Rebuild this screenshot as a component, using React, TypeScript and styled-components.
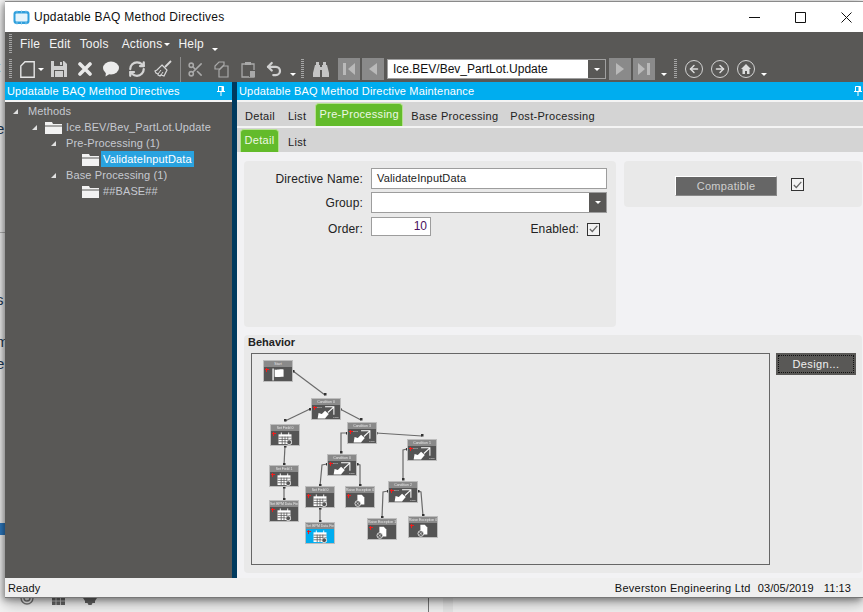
import React from 'react';
import styled, {createGlobalStyle} from 'styled-components';
import {ArrowLeft, ArrowRight, RefreshCw, Scissors, Undo2} from 'lucide-react';

const GlobalStyle = createGlobalStyle`
    html, body {
        margin: 0;
        padding: 0;
        background: #f4f4f4;
        font-family: "Liberation Sans", Arial, sans-serif;
    }
`

type NodeKind = 'flag' | 'cond' | 'cal' | 'raise'

type FlowNode = { x: number, y: number, title: string, kind: NodeKind, blue?: boolean }

const nodes: FlowNode[] = [
    {x: 263, y: 360, title: 'Start', kind: 'flag'},
    {x: 311, y: 398, title: 'Condition 0', kind: 'cond'},
    {x: 270, y: 424, title: 'Set Field 0', kind: 'cal'},
    {x: 347, y: 422, title: 'Condition 3', kind: 'cond'},
    {x: 407, y: 439, title: 'Condition 1', kind: 'cond'},
    {x: 327, y: 454, title: 'Condition 0', kind: 'cond'},
    {x: 269, y: 465, title: 'Set Field 1', kind: 'cal'},
    {x: 269, y: 500, title: 'Set BPM Data Field', kind: 'cal'},
    {x: 305, y: 486, title: 'Set Field 0', kind: 'cal'},
    {x: 345, y: 486, title: 'Raise Exception 0', kind: 'raise'},
    {x: 388, y: 481, title: 'Condition 2', kind: 'cond'},
    {x: 367, y: 518, title: 'Raise Exception 1', kind: 'raise'},
    {x: 408, y: 516, title: 'Raise Exception 0', kind: 'raise'},
    {x: 305, y: 522, title: 'Set BPM Data Field', kind: 'cal', blue: true},
]

const edges: number[][][] = [
    [[293, 371], [325, 395]],
    [[310, 409], [285, 421]],
    [[340, 409], [361, 420]],
    [[285, 446], [284, 465]],
    [[284, 487], [284, 500]],
    [[347, 433], [341, 433], [341, 453]],
    [[376, 433], [422, 436]],
    [[407, 449], [403, 450], [403, 480]],
    [[327, 464], [322, 465], [320, 486]],
    [[357, 464], [360, 465], [360, 486]],
    [[320, 508], [320, 522]],
    [[388, 491], [383, 492], [382, 518]],
    [[418, 491], [421, 492], [423, 516]],
]

const NodeIcon = ({kind}: { kind: NodeKind }) => {
    if (kind === 'flag') {
        return (
            <svg width="14" height="14" viewBox="0 0 14 14">
                <path d="M1 .5h1.400v13H1z" fill="#fff"/>
                <path d="M3.400 1.500c3 1 5-.6 9.600 0v8c-3-.8-6.600 1-9.600 0z" fill="#fff"/>
            </svg>
        )
    }
    if (kind === 'cond') {
        return (
            <svg width="20" height="14" viewBox="0 0 20 14">
                <path d="M1 13.500l1-6 3.500 1 3.500-3.500 4 3.500-3 3.500-1 1.500z" fill="#fff"/>
                <path d="M9 .8h9.500v8.500M18 1.500L12 7" fill="none" stroke="#fff" strokeWidth="1.100"/>
            </svg>
        )
    }
    if (kind === 'cal') {
        return (
            <svg width="16" height="14" viewBox="0 0 16 14">
                <path d="M1 2.500h14V13H1z" fill="#fff"/>
                <path d="M1 5.500h14M1 8h14M1 10.500h14M5 5v8M8 5v8M11 5v8" stroke="#555" strokeWidth=".8"/>
                <path d="M4 .5v3M12 .5v3" stroke="#fff" strokeWidth="1"/>
                <circle cx="12.500" cy="11" r="2.600" fill="#555" stroke="#fff" strokeWidth=".8"/>
            </svg>
        )
    }
    return (
        <svg width="14" height="15" viewBox="0 0 14 15">
            <path d="M4 1h5l3 3v8H4z" fill="#fff"/>
            <circle cx="4.500" cy="11" r="3.300" fill="#555" stroke="#fff" strokeWidth=".9"/>
            <path d="M3 9.500l3 3M6 9.500l-3 3" stroke="#fff" strokeWidth=".7"/>
        </svg>
    )
}

const Caret = styled.span<{ $ml: number, $low?: boolean }>`
    width: 0;
    height: 0;
    margin-left: ${p => p.$ml}px;
    margin-top: ${p => p.$low ? 10 : 0}px;
    border-left: 3px solid transparent;
    border-right: 3px solid transparent;
    border-top: 3px solid #fff;
    flex: none;
`

const Grip = styled.span<{ $ml: number }>`
    width: 3px;
    height: 20px;
    margin-left: ${p => p.$ml}px;
    flex: none;
    background: repeating-linear-gradient(to bottom, #a5a5a5 0 1px, transparent 1px 2px);
`

const Slot = styled.span<{ $ml: number }>`
    display: flex;
    margin-left: ${p => p.$ml}px;
    flex: none;
`

const PinIcon = () => (
    <svg width="8" height="10" viewBox="0 0 8 10">
        <path d="M1.500 .5h5v5h-5zM0 5.500h8M4 6v4" fill="none" stroke="#fff" strokeWidth="1"/>
        <path d="M4.500 1h1.500v4.500H4.500z" fill="#fff"/>
    </svg>
)

const FolderIcon = () => (
    <svg width="17" height="13" viewBox="0 0 17 13">
        <path d="M0 1h7l1 2h9v1.500H0z" fill="#f2f2f2"/>
        <path d="M0 5.500h17V13H0z" fill="#f2f2f2"/>
    </svg>
)

const NavArrow = ({dir, end}: { dir: 'l' | 'r', end?: boolean }) => (
    <svg width="16" height="16" viewBox="0 0 16 16" fill="#b9b9b9">
        {dir === 'l'
            ? <path d={end ? 'M14 2v12L7 8z' : 'M12 2v12L4 8z'}/>
            : <path d={end ? 'M2 2v12l7-6z' : 'M4 2v12l8-6z'}/>}
        {end && <path d={dir === 'l' ? 'M2 2h3v12H2z' : 'M11 2h3v12h-3z'}/>}
    </svg>
)

const Check = () => (
    <svg width="9" height="8" viewBox="0 0 9 8">
        <path d="M.8 4l2.500 2.500L8.300 .8" fill="none" stroke="#666" strokeWidth="1.200"/>
    </svg>
)

const App = () => {
    return (
        <Desktop>
            <GlobalStyle/>
            <BackText $top={58}>t</BackText>
            <BackText $top={82}>;</BackText>
            <BackText $top={120}>e</BackText>
            <BackText $top={291}>s</BackText>
            <BackText $top={311}>l</BackText>
            <BackText $top={333}>m</BackText>
            <BackText $top={355}>e</BackText>
            <BackRule/>
            <BackBlue/>
            <BackLine/>
            <BackBand/>
            <BackIcons>
                <svg width="14" height="7" viewBox="0 0 14 7">
                    <path d="M1 0a6 6 0 0 0 12 0M4 0a3 3 0 0 0 6 0" fill="none" stroke="#777" strokeWidth="1.300"/>
                </svg>
                <svg width="13" height="7" viewBox="0 0 13 7">
                    <path d="M0 0h13v7H0z" fill="#666"/>
                    <path d="M4 0v7M8.500 0v7M0 3h13" stroke="#ddd" strokeWidth=".8"/>
                </svg>
                <svg width="14" height="7" viewBox="0 0 14 7">
                    <path d="M0 0h14l-2 3v2H9.500l-1 2h-3l-1-2H2V3z" fill="#666"/>
                </svg>
            </BackIcons>

            <Window>
                <TitleBar>
                    <AppLogo>
                        <svg width="17" height="15" viewBox="0 0 17 15">
                            <rect x="0.500" y="1" width="16" height="13" rx="3" fill="#2f9fdc"/>
                            <rect x="2.500" y="3.500" width="12" height="8" rx="1" fill="#e4f4fc"/>
                            <path d="M4 .5v2M8.500 .5v2M13 .5v2M4 12v2.500M8.500 12v2.500M13 12v2.500" stroke="#7fc6ec"/>
                        </svg>
                    </AppLogo>
                    <TitleText>Updatable BAQ Method Directives</TitleText>
                    <WindowControls>
                        <WindowButton>
                            <svg width="11" height="11" viewBox="0 0 11 11"><path d="M0 5.500h11" stroke="#111"/></svg>
                        </WindowButton>
                        <WindowButton>
                            <svg width="11" height="11" viewBox="0 0 11 11"><path d="M.5 .5h10v10H.5z" fill="none" stroke="#111"/></svg>
                        </WindowButton>
                        <WindowButton>
                            <svg width="11" height="11" viewBox="0 0 11 11"><path d="M.5 .5l10 10M10.500 .5l-10 10" stroke="#111"/></svg>
                        </WindowButton>
                    </WindowControls>
                </TitleBar>

                <MenuRow>
                    <Grip $ml={4}/>
                    <MenuItem $ml={8}>File</MenuItem>
                    <MenuItem $ml={9}>Edit</MenuItem>
                    <MenuItem $ml={9}>Tools</MenuItem>
                    <MenuItem $ml={13}>Actions</MenuItem>
                    <Caret $ml={2}/>
                    <MenuItem $ml={8}>Help</MenuItem>
                    <Caret $ml={8} $low/>
                </MenuRow>

                <ToolRow>
                    <Grip $ml={4}/>
                    <Slot $ml={8}>
                        <svg width="15" height="17" viewBox="0 0 15 17">
                            <path d="M5 .8h9.200v15.400H.8V5z" fill="none" stroke="#e6e6e6" strokeWidth="1.400"/>
                        </svg>
                    </Slot>
                    <Caret $ml={3}/>
                    <Slot $ml={7}>
                        <svg width="16" height="16" viewBox="0 0 16 16">
                            <path d="M0 0h13l3 3v13H0z" fill="#cfcfcf"/>
                            <path d="M3 0h9v5H3z" fill="#595856"/>
                            <path d="M9 1h2v3H9z" fill="#cfcfcf"/>
                            <path d="M3 9h10v7H3z" fill="#595856"/>
                            <path d="M4 10h8v6H4z" fill="#cfcfcf"/>
                        </svg>
                    </Slot>
                    <Slot $ml={11}>
                        <svg width="14" height="14" viewBox="0 0 14 14">
                            <path d="M2 2l10 10M12 2L2 12" stroke="#e8e8e8" strokeWidth="3.600" strokeLinecap="round"/>
                        </svg>
                    </Slot>
                    <Slot $ml={11}>
                        <svg width="16" height="16" viewBox="0 0 16 16">
                            <ellipse cx="8" cy="7" rx="8" ry="6.500" fill="#ececec"/>
                            <path d="M3 11l-.5 4.500L8 12z" fill="#ececec"/>
                        </svg>
                    </Slot>
                    <Slot $ml={9}>
                        <RefreshCw size={18} color="#d4d4d4" strokeWidth={3}/>
                    </Slot>
                    <Slot $ml={8}>
                        <svg width="18" height="18" viewBox="0 0 18 18">
                            <path d="M17 1l-6 6" stroke="#d8d8d8" strokeWidth="1.800"/>
                            <path d="M8 5l5 5-3 6-3-1-1 1-2-1 0-1-2-1-1-2 2-1z" fill="none" stroke="#d8d8d8" strokeWidth="1.200"/>
                            <path d="M4 14l3-4M7 15l2-3" stroke="#d8d8d8"/>
                        </svg>
                    </Slot>
                    <ToolSeparator/>
                    <Slot $ml={6}>
                        <Scissors size={17} color="#a9a9a9" strokeWidth={2.200}/>
                    </Slot>
                    <Slot $ml={10}>
                        <svg width="15" height="17" viewBox="0 0 15 17" fill="none" stroke="#a9a9a9" strokeWidth="1.200">
                            <path d="M5 1h5v3L6 8H1V5z"/>
                            <path d="M9 5h5v11H5V9z"/>
                        </svg>
                    </Slot>
                    <Slot $ml={12}>
                        <svg width="15" height="17" viewBox="0 0 15 17">
                            <path d="M1 3h12v13H1z" fill="none" stroke="#a9a9a9" strokeWidth="1.300"/>
                            <path d="M4 1h6v3H4z" fill="#a9a9a9"/>
                            <path d="M8 9h7v7H8z" fill="#595856"/>
                            <path d="M9 10h5v6H9z" fill="#a9a9a9"/>
                        </svg>
                    </Slot>
                    <Slot $ml={9}>
                        <Undo2 size={18} color="#d0d0d0" strokeWidth={3}/>
                    </Slot>
                    <Caret $ml={7} $low/>
                    <Grip $ml={5}/>
                    <Slot $ml={9}>
                        <svg width="16" height="15" viewBox="0 0 16 15" fill="#c4c4c4">
                            <path d="M3 0h3v3H3zM10 0h3v3h-3z"/>
                            <path d="M2 3h5v2h2V3h5l2 8v4H9V8H7v7H0v-4z"/>
                        </svg>
                    </Slot>
                    <NavButton $ml={9}><NavArrow dir="l" end/></NavButton>
                    <NavButton $ml={2}><NavArrow dir="l"/></NavButton>
                    <Combo>
                        <ComboText>Ice.BEV/Bev_PartLot.Update</ComboText>
                        <ComboDrop><Caret $ml={0}/></ComboDrop>
                    </Combo>
                    <NavButton $ml={3}><NavArrow dir="r"/></NavButton>
                    <NavButton $ml={2}><NavArrow dir="r" end/></NavButton>
                    <Caret $ml={6} $low/>
                    <Grip $ml={7}/>
                    <RoundButton $ml={8}><ArrowLeft size={12} color="#ddd" strokeWidth={3}/></RoundButton>
                    <RoundButton $ml={8}><ArrowRight size={12} color="#ddd" strokeWidth={3}/></RoundButton>
                    <RoundButton $ml={8}>
                        <svg width="10" height="10" viewBox="0 0 10 10">
                            <path d="M5 0l5 5H8.500v5H6V7H4v3H1.500V5H0z" fill="#ddd"/>
                        </svg>
                    </RoundButton>
                    <Caret $ml={6} $low/>
                </ToolRow>

                <Body>
                    <LeftPanel>
                        <DockHeader $pinGap={7}>
                            <span>Updatable BAQ Method Directives</span>
                            <PinIcon/>
                        </DockHeader>
                        <Tree>
                            <TreeRow $indent={8}><TreeArrow/><TreeLabel>Methods</TreeLabel></TreeRow>
                            <TreeRow $indent={27}><TreeArrow/><FolderIcon/><TreeLabel $ml={2}>Ice.BEV/Bev_PartLot.Update</TreeLabel></TreeRow>
                            <TreeRow $indent={46}><TreeArrow/><TreeLabel>Pre-Processing (1)</TreeLabel></TreeRow>
                            <TreeRow $indent={77}><FolderIcon/><TreeLabel $ml={2} $selected>ValidateInputData</TreeLabel></TreeRow>
                            <TreeRow $indent={46}><TreeArrow/><TreeLabel>Base Processing (1)</TreeLabel></TreeRow>
                            <TreeRow $indent={77}><FolderIcon/><TreeLabel $ml={2}>##BASE##</TreeLabel></TreeRow>
                        </Tree>
                    </LeftPanel>

                    <Splitter/>

                    <RightPanel>
                        <DockHeader $pinGap={1}>
                            <span>Updatable BAQ Method Directive Maintenance</span>
                            <PinIcon/>
                        </DockHeader>
                        <TabStrip>
                            <Tab $ml={8}>Detail</Tab>
                            <Tab $ml={13}>List</Tab>
                            <Tab $ml={9} $active $w={88}>Pre-Processing</Tab>
                            <Tab $ml={8}>Base Processing</Tab>
                            <Tab $ml={12}>Post-Processing</Tab>
                        </TabStrip>
                        <TabStrip $last>
                            <Tab $ml={3} $active $w={39}>Detail</Tab>
                            <Tab $ml={9}>List</Tab>
                        </TabStrip>

                        <Content>
                            <TopPanels>
                                <FormPanel>
                                    <FieldLabel>Directive Name:</FieldLabel>
                                    <TextBox>ValidateInputData</TextBox>
                                    <FieldLabel>Group:</FieldLabel>
                                    <TextBox $drop>
                                        <ComboDrop $slim><Caret $ml={0}/></ComboDrop>
                                    </TextBox>
                                    <FieldLabel $low>Order:</FieldLabel>
                                    <OrderRow>
                                        <OrderBox>10</OrderBox>
                                        <EnabledField>
                                            <span>Enabled:</span>
                                            <CheckBox><Check/></CheckBox>
                                        </EnabledField>
                                    </OrderRow>
                                </FormPanel>
                                <CompatPanel>
                                    <CompatButton>Compatible</CompatButton>
                                    <CheckBox><Check/></CheckBox>
                                </CompatPanel>
                            </TopPanels>

                            <BehaviorPanel>
                                <BehaviorTitle>Behavior</BehaviorTitle>
                                <BehaviorRow>
                                    <Canvas>
                                        <CanvasInner>
                                            <EdgeLayer viewBox="252 354 517 210">
                                                {edges.map((e, i) => (
                                                    <g key={i}>
                                                        <polyline
                                                            points={e.map(p => p.join(',')).join(' ')}
                                                            fill="none"
                                                            stroke="#6a6a6a"
                                                            strokeWidth="1.200"
                                                        />
                                                        <rect x={e[0][0] - 1} y={e[0][1] - 1} width="2.500" height="2.500" fill="#333"/>
                                                        <rect x={e[e.length - 1][0] - 1} y={e[e.length - 1][1] - 2} width="2.500" height="2.500" fill="#333"/>
                                                    </g>
                                                ))}
                                            </EdgeLayer>
                                            {nodes.map((n, i) => (
                                                <Node key={i} $x={n.x - 252} $y={n.y - 354} $blue={n.blue}>
                                                    <NodeTitle>{n.title}</NodeTitle>
                                                    <NodeBody>
                                                        <RedPlus/>
                                                        <NodeIcon kind={n.kind}/>
                                                        {n.kind === 'cond' && <NodeTag $side="true">True</NodeTag>}
                                                        {n.kind === 'cond' && <NodeTag $side="false">False</NodeTag>}
                                                    </NodeBody>
                                                </Node>
                                            ))}
                                        </CanvasInner>
                                    </Canvas>
                                    <DesignButton><span>Design...</span></DesignButton>
                                </BehaviorRow>
                            </BehaviorPanel>
                        </Content>
                    </RightPanel>
                </Body>

                <StatusBar>
                    <StatusText>Ready</StatusText>
                    <StatusRight>
                        <StatusText $spacing={.25}>Beverston Engineering Ltd</StatusText>
                        <StatusText>03/05/2019</StatusText>
                        <StatusText>11:13</StatusText>
                    </StatusRight>
                </StatusBar>
            </Window>
        </Desktop>
    );
};

export default App;

const Desktop = styled.div`
    position: relative;
    width: 863px;
    height: 612px;
    overflow: hidden;
    padding: 1px 0 0 5px;
    box-sizing: border-box;
    background: #f4f4f4;
`
const BackText = styled.span<{ $top: number }>`
    position: absolute;
    left: -4px;
    top: ${p => p.$top}px;
    font-size: 15px;
    color: #1d3a55;
`
const BackRule = styled.div`
    position: absolute;
    left: 0;
    top: 232px;
    width: 5px;
    height: 1px;
    background: #b5b5b5;
`
const BackBlue = styled.div`
    position: absolute;
    left: 0;
    top: 523px;
    width: 5px;
    height: 12px;
    background: #2f7cc4;
`
const BackLine = styled.div`
    position: absolute;
    left: 428px;
    top: 598px;
    width: 1px;
    height: 14px;
    background: #777;
`
const BackBand = styled.div`
    position: absolute;
    left: 443px;
    top: 598px;
    width: 10px;
    height: 14px;
    background: #e9e9e9;
`
const BackIcons = styled.div`
    position: absolute;
    left: 20px;
    top: 598px;
    display: flex;
    gap: 18px;
`
const Window = styled.div`
    position: relative;
    width: 858px;
    height: 597px;
    display: flex;
    flex-direction: column;
    background: #fff;
    border-top: 1px solid #8a8a8a;
    box-sizing: border-box;
    box-shadow: -2px 2px 6px rgba(0, 0, 0, .35), 0 6px 14px rgba(0, 0, 0, .3);
`
const TitleBar = styled.div`
    height: 30px;
    flex: none;
    display: flex;
    align-items: center;
    background: #fff;
    padding-left: 8px;
`
const AppLogo = styled.span`
    display: flex;
    width: 21px;
`
const TitleText = styled.span`
    font-size: 12px;
    letter-spacing: .25px;
    color: #111;
`
const WindowControls = styled.div`
    display: flex;
    margin-left: auto;
    margin-right: -6px;
`
const WindowButton = styled.span`
    width: 46px;
    height: 30px;
    display: flex;
    align-items: center;
    justify-content: center;
`
const MenuRow = styled.div`
    height: 25px;
    flex: none;
    display: flex;
    align-items: center;
    padding-bottom: 1px;
    box-sizing: border-box;
    background: #595856;
`
const MenuItem = styled.span<{ $ml: number }>`
    margin-left: ${p => p.$ml}px;
    font-size: 12px;
    letter-spacing: .2px;
    color: #f4f4f4;
`
const ToolRow = styled.div`
    height: 25px;
    flex: none;
    display: flex;
    align-items: center;
    padding-bottom: 1px;
    box-sizing: border-box;
    background: #595856;
`
const ToolSeparator = styled.span`
    width: 1px;
    height: 25px;
    margin-left: 8px;
    background: #8c8c8c;
    flex: none;
`
const NavButton = styled.span<{ $ml: number }>`
    width: 22px;
    height: 22px;
    margin-left: ${p => p.$ml}px;
    display: flex;
    align-items: center;
    justify-content: center;
    background: #8a8a8a;
    flex: none;
`
const Combo = styled.div`
    width: 219px;
    height: 20px;
    margin-left: 3px;
    display: flex;
    background: #fff;
    border: 1px solid #a0a0a0;
    box-sizing: border-box;
    flex: none;
`
const ComboText = styled.span`
    flex: 1;
    padding-left: 5px;
    font-size: 12px;
    line-height: 18px;
    color: #111;
`
const ComboDrop = styled.span<{ $slim?: boolean }>`
    width: 17px;
    display: flex;
    align-items: center;
    justify-content: center;
    background: #595856;
    ${p => p.$slim && 'height: 100%;'}
`
const RoundButton = styled.span<{ $ml: number }>`
    width: 18px;
    height: 18px;
    margin-left: ${p => p.$ml}px;
    display: flex;
    align-items: center;
    justify-content: center;
    border: 1.500px solid #d2d2d2;
    border-radius: 50%;
    box-sizing: border-box;
    flex: none;
`
const Body = styled.div`
    flex: 1;
    display: flex;
    min-height: 0;
`
const LeftPanel = styled.div`
    width: 227px;
    flex: none;
    background: #595856;
`
const Splitter = styled.div`
    width: 5px;
    flex: none;
    background: #003a5e;
`
const RightPanel = styled.div`
    flex: 1;
    display: flex;
    flex-direction: column;
    min-width: 0;
    background: #f2f2f4;
`
const DockHeader = styled.div<{ $pinGap: number }>`
    height: 18px;
    display: flex;
    align-items: center;
    justify-content: space-between;
    padding: 0 ${p => p.$pinGap}px 0 2px;
    background: #00adef;
    color: #fff;
    font-size: 11px;
    letter-spacing: .17px;
    border-bottom: 2px solid #f4f4f4;
    box-sizing: content-box;
`
const Tree = styled.div`
    padding-top: 1px;
`
const TreeRow = styled.div<{ $indent: number }>`
    height: 16px;
    display: flex;
    align-items: center;
    padding-left: ${p => p.$indent}px;
`
const TreeArrow = styled.span`
    width: 0;
    height: 0;
    margin-right: 8px;
    border-left: 5px solid transparent;
    border-bottom: 5px solid #e0e0e0;
    flex: none;
`
const TreeLabel = styled.span<{ $ml?: number, $selected?: boolean }>`
    margin-left: ${p => p.$ml || 0}px;
    padding: 0 2px;
    font-size: 11px;
    letter-spacing: .12px;
    line-height: 16px;
    color: ${p => p.$selected ? '#fff' : '#c6c9d0'};
    background: ${p => p.$selected ? '#29a3e0' : 'transparent'};
`
const TabStrip = styled.div<{ $last?: boolean }>`
    height: 24px;
    flex: none;
    display: flex;
    align-items: flex-end;
    background: #d4d4d4;
    border-bottom: ${p => p.$last ? 'none' : '2px solid #f4f4f4'};
    box-sizing: content-box;
`
const Tab = styled.span<{ $ml: number, $active?: boolean, $w?: number }>`
    margin-left: ${p => p.$ml}px;
    height: ${p => p.$active ? 23 : 24}px;
    width: ${p => p.$w ? `${p.$w}px` : 'auto'};
    display: flex;
    align-items: center;
    justify-content: center;
    box-sizing: border-box;
    font-size: 11px;
    letter-spacing: .3px;
    color: ${p => p.$active ? '#eef8e4' : '#222'};
    background: ${p => p.$active ? '#63bb2b' : 'transparent'};
    border: ${p => p.$active ? '1px solid #b5e28f' : 'none'};
    border-bottom: none;
    border-radius: ${p => p.$active ? '4px 4px 0 0' : '0'};
    padding-bottom: ${p => p.$active ? 3 : 0}px;
    padding-top: ${p => p.$active ? 0 : 3}px;
`
const Content = styled.div`
    flex: 1;
    display: flex;
    flex-direction: column;
    gap: 8px;
    padding: 9px 1px 5px 7px;
    min-height: 0;
`
const TopPanels = styled.div`
    display: flex;
    gap: 8px;
    align-items: flex-start;
`
const FormPanel = styled.div`
    width: 372px;
    height: 166px;
    flex: none;
    display: grid;
    grid-template-columns: 119px 236px;
    grid-auto-rows: max-content;
    column-gap: 8px;
    row-gap: 3px;
    align-items: center;
    padding-top: 7px;
    box-sizing: border-box;
    background: #e9e9e9;
    border-radius: 4px;
`
const FieldLabel = styled.span<{ $low?: boolean }>`
    text-align: right;
    font-size: 12px;
    letter-spacing: .15px;
    color: #222;
    padding-top: ${p => p.$low ? 6 : 0}px;
`
const TextBox = styled.div<{ $drop?: boolean }>`
    height: 21px;
    display: flex;
    justify-content: ${p => p.$drop ? 'flex-end' : 'flex-start'};
    padding-left: ${p => p.$drop ? 0 : 5}px;
    box-sizing: border-box;
    background: #fff;
    border: 1px solid #9d9d9d;
    font-size: 11px;
    letter-spacing: .15px;
    line-height: 19px;
    color: #222;
`
const OrderRow = styled.div`
    display: flex;
    justify-content: space-between;
    margin-top: 1px;
`
const OrderBox = styled.div`
    width: 60px;
    height: 19px;
    box-sizing: border-box;
    padding-right: 3px;
    text-align: right;
    background: #fff;
    border: 1px solid #9d9d9d;
    font-size: 12px;
    line-height: 17px;
    color: #4a1060;
`
const EnabledField = styled.div`
    display: flex;
    align-items: center;
    gap: 8px;
    margin: 5px 7px 0 0;
    font-size: 12px;
    letter-spacing: .15px;
    color: #222;
`
const CheckBox = styled.span`
    width: 13px;
    height: 13px;
    display: flex;
    align-items: center;
    justify-content: center;
    box-sizing: border-box;
    border: 1px solid #333;
    background: #f2f2f2;
    flex: none;
`
const CompatPanel = styled.div`
    width: 238px;
    height: 46px;
    display: flex;
    align-items: flex-start;
    gap: 14px;
    padding: 15px 0 0 51px;
    box-sizing: border-box;
    background: #e9e9e9;
    border-radius: 4px;
    ${CheckBox} {
        margin-top: 2px;
    }
`
const CompatButton = styled.span`
    width: 102px;
    height: 20px;
    display: flex;
    align-items: center;
    justify-content: center;
    box-sizing: border-box;
    background: #666;
    border: 1px solid;
    border-color: #fff #888 #888 #fff;
    font-size: 11px;
    letter-spacing: .3px;
    color: #cfcfcf;
`
const BehaviorPanel = styled.div`
    width: 618px;
    height: 238px;
    padding: 0 0 0 4px;
    box-sizing: border-box;
    background: #e9e9e9;
    border-radius: 4px;
`
const BehaviorTitle = styled.div`
    height: 18px;
    font-size: 11px;
    font-weight: bold;
    line-height: 15px;
    color: #222;
`
const BehaviorRow = styled.div`
    display: flex;
    gap: 6px;
    padding-left: 3px;
`
const Canvas = styled.div`
    width: 519px;
    height: 212px;
    box-sizing: border-box;
    border: 1px solid #666;
    flex: none;
`
const CanvasInner = styled.div`
    position: relative;
    width: 100%;
    height: 100%;
    filter: blur(.4px);
`
const EdgeLayer = styled.svg`
    position: absolute;
    inset: 0;
    width: 100%;
    height: 100%;
`
const Node = styled.div<{ $x: number, $y: number, $blue?: boolean }>`
    position: absolute;
    left: ${p => p.$x}px;
    top: ${p => p.$y}px;
    width: 30px;
    height: 22px;
    display: flex;
    flex-direction: column;
    box-sizing: border-box;
    border: 1px solid #bdbdbd;
    overflow: hidden;
    background: ${p => p.$blue ? '#00adef' : '#555'};
`
const NodeTitle = styled.div`
    height: 6px;
    flex: none;
    background: #8a8a8a;
    font-size: 3.500px;
    line-height: 6px;
    text-align: center;
    white-space: nowrap;
    overflow: hidden;
    color: #e8e8e8;
`
const NodeBody = styled.div`
    position: relative;
    flex: 1;
    display: flex;
    align-items: center;
    justify-content: center;
    svg {
        height: 13px;
    }
`
const NodeTag = styled.span<{ $side: 'true' | 'false' }>`
    position: absolute;
    font-size: 2.500px;
    line-height: 3px;
    color: #ddd;
    ${p => p.$side === 'true' ? 'left: 5px; top: 1px;' : 'right: 1px; bottom: 0;'}
`
const RedPlus = styled.span`
    position: absolute;
    left: 1px;
    top: 1px;
    width: 4px;
    height: 4px;
    background:
        linear-gradient(#f01c1c, #f01c1c) center / 4px 1.200px no-repeat,
        linear-gradient(#f01c1c, #f01c1c) center / 1.200px 4px no-repeat;
`
const DesignButton = styled.div`
    width: 80px;
    height: 22px;
    padding: 2px;
    box-sizing: border-box;
    background: #595856;
    font-size: 11px;
    letter-spacing: .4px;
    color: #f0f0f0;
    span {
        display: flex;
        align-items: center;
        justify-content: center;
        height: 100%;
        border: 1px dotted #111;
        box-sizing: border-box;
    }
`
const StatusBar = styled.div`
    height: 20px;
    flex: none;
    display: flex;
    align-items: center;
    justify-content: space-between;
    padding: 1px 12px 0 3px;
    background: #efefef;
    border-bottom: 1px solid #777;
    box-sizing: border-box;
`
const StatusRight = styled.div`
    display: flex;
    gap: 7px;
    ${'span:last-child'} {
        margin-left: 3px;
    }
`
const StatusText = styled.span<{ $spacing?: number }>`
    font-size: 11px;
    letter-spacing: ${p => p.$spacing ?? .1}px;
    color: #111;
`
